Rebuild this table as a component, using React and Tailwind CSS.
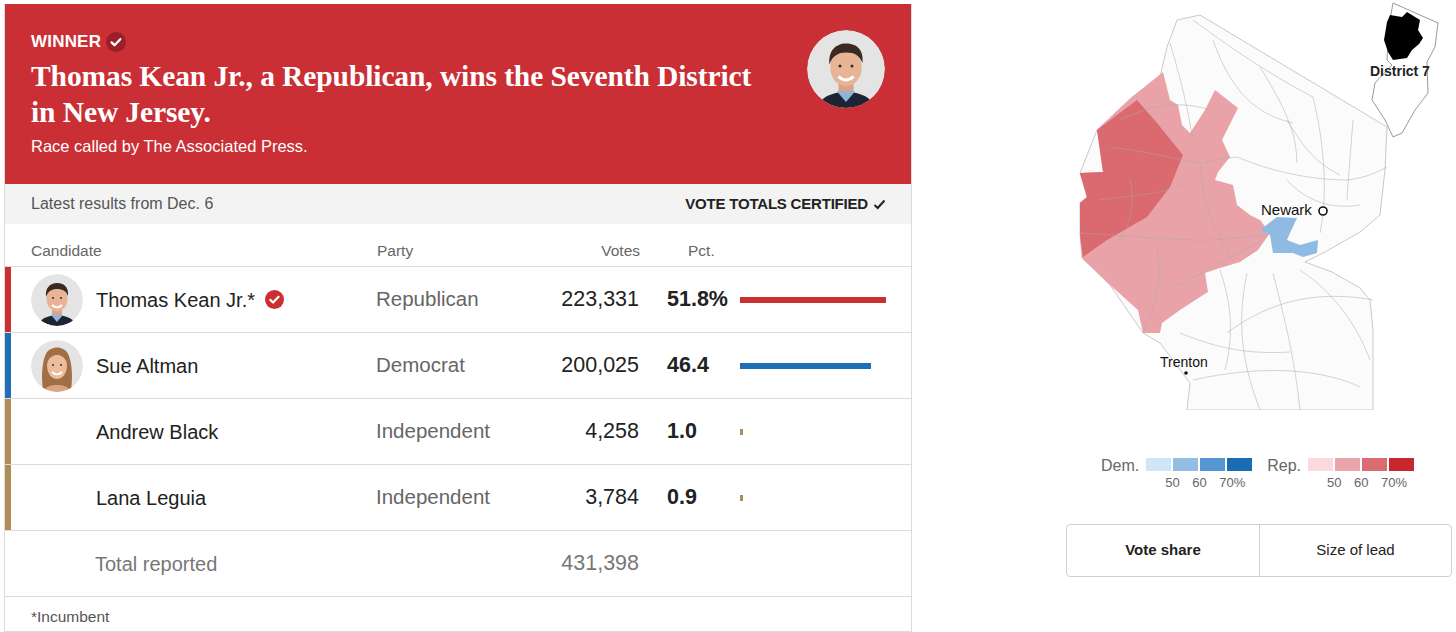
import React from "react"

const SANS = { fontFamily: '"Liberation Sans", Arial, sans-serif' }
const SERIF = { fontFamily: '"Liberation Serif", "Times New Roman", serif' }

function CheckBadge({ size = 19, bg = "#c9302f" }) {
  return (
    <svg width={size} height={size} viewBox="0 0 20 20">
      <circle cx="10" cy="10" r="10" fill={bg} />
      <path d="M5.6 10.4l2.9 2.8 5.8-6" fill="none" stroke="#fff" strokeWidth="2.3" strokeLinecap="round" strokeLinejoin="round" />
    </svg>
  )
}

// Drawn stand-ins for the candidate photos
function Kean({ size = 52 }) {
  return (
    <svg width={size} height={size} viewBox="0 0 52 52">
      <defs>
        <clipPath id={`kc${size}`}><circle cx="26" cy="26" r="26" /></clipPath>
      </defs>
      <g clipPath={`url(#kc${size})`}>
        <rect width="52" height="52" fill="#e4e4e4" />
        <path d="M6 54c2-9 9-12 20-13 11 1 18 4 20 13z" fill="#1c2533" />
        <path d="M20 41l6 7 6-7-6-2z" fill="#8fb3d9" />
        <rect x="21" y="32" width="10" height="9" fill="#d9a487" />
        <ellipse cx="26" cy="25" rx="10.5" ry="12.5" fill="#e8b496" />
        <path d="M15 23c-1-9 4-14 11-14s12 4 11 13c-2-5-5-7-11-7-5 0-9 2-11 8z" fill="#3a2a22" />
        <path d="M21 31c3 3 7 3 10 0" fill="none" stroke="#fff" strokeWidth="2" />
        <circle cx="22" cy="24" r="1" fill="#3a2a22" />
        <circle cx="30" cy="24" r="1" fill="#3a2a22" />
      </g>
    </svg>
  )
}

function Altman({ size = 52 }) {
  return (
    <svg width={size} height={size} viewBox="0 0 52 52">
      <defs>
        <clipPath id="ac"><circle cx="26" cy="26" r="26" /></clipPath>
      </defs>
      <g clipPath="url(#ac)">
        <rect width="52" height="52" fill="#e4e4e4" />
        <path d="M12 50c-2-14-1-30 4-38 5-6 15-6 20 0 5 8 6 24 4 38z" fill="#a06f45" />
        <path d="M10 54c3-7 9-9 16-9s13 2 16 9z" fill="#d8a57f" />
        <ellipse cx="26" cy="26" rx="10" ry="13" fill="#ebbd9c" />
        <path d="M16 22c1-8 5-12 10-12s10 4 10 12c-3-5-6-7-10-7s-7 2-10 7z" fill="#a06f45" />
        <path d="M21 32c3 3 7 3 10 0" fill="none" stroke="#fff" strokeWidth="2" />
        <circle cx="22" cy="25" r="1" fill="#4a3322" />
        <circle cx="30" cy="25" r="1" fill="#4a3322" />
      </g>
    </svg>
  )
}

const ROWS = [
  { name: "Thomas Kean Jr.*", winner: true, party: "Republican", votes: "223,331", pct: "51.8%", bar: 146, color: "bg-[#c9302f]", photo: "kean" },
  { name: "Sue Altman", party: "Democrat", votes: "200,025", pct: "46.4", bar: 131, color: "bg-[#1f6fb5]", photo: "altman" },
  { name: "Andrew Black", party: "Independent", votes: "4,258", pct: "1.0", bar: 3, color: "bg-[#b08d57]" },
  { name: "Lana Leguia", party: "Independent", votes: "3,784", pct: "0.9", bar: 3, color: "bg-[#b08d57]" },
]

function ResultsCard() {
  return (
    <div className="ml-[4px] mt-[4px] w-[908px] border border-[#dcdcdc] border-t-0" style={SANS}>
      <div className="h-[180px] bg-[#c92f35] pl-[26px] pr-[26px] pt-[25px] flex justify-between">
        <div>
          <div className="flex items-center gap-[5px]">
            <span className="text-[17px] font-bold text-white tracking-[0.2px]">WINNER</span>
            <CheckBadge size={20} bg="#9a1f27" />
          </div>
          <h1 className="mt-[3px] text-[29.5px] leading-[36px] font-bold text-white tracking-[-0.1px]" style={SERIF}>
            Thomas Kean Jr., a Republican, wins the Seventh District<br />in New Jersey.
          </h1>
          <p className="mt-[4px] text-[16.5px] text-white">Race called by The Associated Press.</p>
        </div>
        <div className="mt-[1px] w-[78px] h-[78px] rounded-full overflow-hidden">
          <Kean size={78} />
        </div>
      </div>
      <div className="h-[40px] bg-[#f3f3f3] flex items-center justify-between pl-[26px] pr-[25px]">
        <span className="text-[16px] text-[#555]">Latest results from Dec. 6</span>
        <span className="flex items-center gap-[5px] text-[15px] font-bold text-[#222] tracking-[-0.2px]">
          VOTE TOTALS CERTIFIED
          <svg width="13" height="11" viewBox="0 0 13 11"><path d="M1.5 6l3.2 3 6.8-7.5" fill="none" stroke="#222" strokeWidth="2" /></svg>
        </span>
      </div>
      <div className="h-[43px] flex items-end pb-[4px] text-[15.5px] text-[#666] border-b border-[#dcdcdc]">
        <div className="w-[372px] pl-[26px]">Candidate</div>
        <div className="w-[150px]">Party</div>
        <div className="w-[113px] text-right">Votes</div>
        <div className="pl-[48px]">Pct.</div>
      </div>
      {ROWS.map((r) => (
        <div key={r.name} className="h-[66px] flex items-stretch border-b border-[#dcdcdc]">
          <div className={`w-[6px] ${r.color}`} />
          <div className="w-[365px] pl-[20px] flex items-center">
            {r.photo ? (
              <div className="w-[52px] h-[52px] rounded-full overflow-hidden mr-[13px]">
                {r.photo === "kean" ? <Kean /> : <Altman />}
              </div>
            ) : (
              <div className="w-[65px]" />
            )}
            <span className="text-[20px] text-[#222]">{r.name}</span>
            {r.winner && <span className="ml-[10px] flex"><CheckBadge /></span>}
          </div>
          <div className="w-[150px] flex items-center text-[20.5px] text-[#666]">{r.party}</div>
          <div className="w-[113px] flex items-center justify-end text-[21.5px] text-[#222]">{r.votes}</div>
          <div className="w-[101px] pl-[28px] flex items-center text-[21.5px] font-bold text-[#222]">{r.pct}</div>
          <div className="flex-1 flex items-center">
            <div className={`h-[6px] ${r.color}`} style={{ width: r.bar }} />
          </div>
        </div>
      ))}
      <div className="h-[66px] flex items-center border-b border-[#dcdcdc]">
        <div className="w-[371px] pl-[90px] text-[20px] text-[#777]">Total reported</div>
        <div className="w-[150px]" />
        <div className="w-[113px] text-right text-[21.5px] text-[#777]">431,398</div>
      </div>
      <div className="h-[40px] pl-[26px] pt-[8px] text-[15.5px] text-[#555]">*Incumbent</div>
    </div>
  )
}

const ROADS = [
  "M50 147 C90 152 120 160 140 163 C155 160 165 158 177 157",
  "M20 233 C70 236 120 241 153 240 C180 238 195 236 207 235",
  "M140 163 C142 180 143 197 150 215 C157 233 165 248 173 262",
  "M97 247 C99 262 101 277 95 300 C90 315 86 325 83 333",
  "M107 290 C135 278 160 263 203 240",
  "M177 157 C220 175 260 180 287 180 C305 178 318 172 327 167",
  "M200 67 C233 120 236 140 237 163",
  "M110 43 C127 100 130 125 133 140",
  "M153 40 C173 97 200 115 233 123",
  "M133 20 C180 55 220 80 253 97",
  "M253 97 C266 150 267 200 260 233",
  "M293 120 C290 160 288 180 287 200",
  "M167 333 C210 300 260 290 313 300",
  "M133 380 C200 365 260 368 300 387",
  "M213 273 C225 320 235 360 240 410",
  "M187 273 C175 330 185 370 200 410",
  "M240 270 C270 290 295 320 310 360",
  "M227 180 C245 200 270 210 300 205",
  "M120 333 C150 345 180 355 230 352",
  "M60 120 C90 105 120 100 150 110",
  "M40 200 C70 195 100 195 123 185",
  "M227 120 C240 140 250 160 280 175",
  "M160 270 C170 300 175 330 165 370",
  "M70 180 C75 200 72 220 60 240",
]

function NJMap() {
  return (
    <div className="relative w-[396px] h-[410px]">
      <svg width="396" height="410" viewBox="0 0 396 410">
        <path
          d="M140 15 L327 127 L325 170 L320 215 L300 232 L265 252 L245 262 L272 272 L300 288 L310 300 L313 330 L313 410 L127 410 L130 383 L100 343 L83 333 L50 285 L22 258 L20 235 L20 203 L27 197 L20 173 L37 130 L72 97 L100 77 L107 47 L117 20 Z"
          fill="#fbfbfb" stroke="#c9c9c9" strokeWidth="1"
        />
        <path
          d="M72 97 L103 72 L110 100 L118 105 L122 125 L130 133 L145 110 L155 90 L178 108 L162 140 L170 157 L158 172 L155 180 L173 185 L177 205 L190 215 L200 220 L210 233 L198 250 L180 262 L160 268 L145 273 L148 292 L140 297 L120 310 L102 323 L100 333 L83 333 L78 310 L50 285 L22 258 L20 235 L20 203 L27 197 L20 173 L43 172 L37 130 Z"
          fill="#e9a3a8"
        />
        <path
          d="M37 130 L77 100 L97 123 L123 155 L110 187 L87 217 L47 240 L23 257 L20 235 L20 203 L27 197 L20 173 L43 172 Z"
          fill="#da6970"
        />
        <path
          d="M200 230 L217 217 L237 218 L230 233 L227 240 L240 245 L258 240 L257 253 L243 257 L233 253 L213 253 L210 235 Z"
          fill="#8fbbe3"
        />
        {ROADS.map((d, i) => (
          <path key={i} d={d} fill="none" stroke="#a9a9a9" strokeOpacity="0.5" strokeWidth="1" />
        ))}
        <circle cx="263" cy="211" r="4" fill="#fff" stroke="#111" strokeWidth="1.6" />
        <circle cx="126" cy="373" r="1.8" fill="#111" />
      </svg>
      <span className="absolute left-[201px] top-[199px] text-[15px] text-[#111]" style={SANS}>Newark</span>
      <span className="absolute left-[100px] top-[352px] text-[14px] text-[#111]" style={SANS}>Trenton</span>
      <div className="absolute left-[305px] top-0 w-[82px] h-[142px]">
        <svg width="82" height="142" viewBox="0 0 82 142">
          <path
            d="M28 3 L73 23 L70 47 L62 62 L63 93 L50 110 L37 133 L28 137 L20 120 L7 100 L10 83 L27 65 L22 60 L23 40 L25 20 Z"
            fill="#fff" stroke="#999" strokeWidth="1"
          />
          <path
            d="M25 15 L37 17 L42 12 L55 20 L53 30 L58 38 L54 44 L47 50 L42 58 L28 60 L23 52 L19 40 L22 22 Z"
            fill="#000"
          />
        </svg>
        <span className="absolute left-[5px] top-[61px] text-[14px] font-bold text-[#222] whitespace-nowrap" style={SANS}>District 7</span>
      </div>
    </div>
  )
}

function LegendScale({ label, colors }) {
  return (
    <div className="flex items-start" style={SANS}>
      <span className="text-[16px] text-[#666] leading-[16px] mr-[7px]">{label}</span>
      <div>
        <div className="flex gap-[2px]">
          {colors.map((c) => (
            <div key={c} className={`w-[25px] h-[13px] ${c}`} />
          ))}
        </div>
        <div className="relative h-[16px] text-[13px] text-[#666]">
          <span className="absolute left-[19px] top-[2px]">50</span>
          <span className="absolute left-[46px] top-[2px]">60</span>
          <span className="absolute left-[73px] top-[2px]">70%</span>
        </div>
      </div>
    </div>
  )
}

export default function App() {
  return (
    <div className="w-[1456px] h-[632px] overflow-hidden bg-white flex">
      <ResultsCard />
      <div className="ml-[148px] flex flex-col">
        <NJMap />
        <div className="mt-[48px] ml-[41px] flex gap-[15px]">
          <LegendScale label="Dem." colors={["bg-[#cfe6f9]", "bg-[#93bde3]", "bg-[#5595d0]", "bg-[#1a6db5]"]} />
          <LegendScale label="Rep." colors={["bg-[#fbd9dc]", "bg-[#e9a5aa]", "bg-[#da6b70]", "bg-[#c8272f]"]} />
        </div>
        <div className="mt-[37px] ml-[6px] w-[386px] h-[53px] flex border border-[#d0d0d0] rounded-[4px] text-[15px] text-[#222]" style={SANS}>
          <div className="w-[193px] flex items-center justify-center font-bold border-r border-[#d0d0d0]">Vote share</div>
          <div className="flex-1 flex items-center justify-center">Size of lead</div>
        </div>
      </div>
    </div>
  )
}
